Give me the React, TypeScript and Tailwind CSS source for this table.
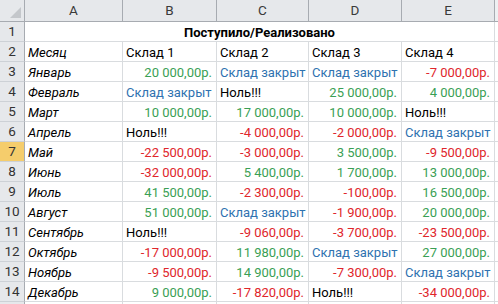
type Tone = 'g' | 'r' | 'b' | 'k';
type Cell = [string, Tone];

const colLetters = ['A', 'B', 'C', 'D', 'E'];

const Z: Cell = ['Ноль!!!', 'k'];
const X: Cell = ['Склад закрыт', 'b'];

const rows: { month: string; cells: Cell[] }[] = [
  { month: 'Январь', cells: [['20 000,00р.', 'g'], X, X, ['-7 000,00р.', 'r']] },
  { month: 'Февраль', cells: [X, Z, ['25 000,00р.', 'g'], ['4 000,00р.', 'g']] },
  { month: 'Март', cells: [['10 000,00р.', 'g'], ['17 000,00р.', 'g'], ['10 000,00р.', 'g'], Z] },
  { month: 'Апрель', cells: [Z, ['-4 000,00р.', 'r'], ['-2 000,00р.', 'r'], X] },
  { month: 'Май', cells: [['-22 500,00р.', 'r'], ['-3 000,00р.', 'r'], ['3 500,00р.', 'g'], ['-9 500,00р.', 'r']] },
  { month: 'Июнь', cells: [['-32 000,00р.', 'r'], ['5 400,00р.', 'g'], ['1 700,00р.', 'g'], ['13 000,00р.', 'g']] },
  { month: 'Июль', cells: [['41 500,00р.', 'g'], ['-2 300,00р.', 'r'], ['-100,00р.', 'r'], ['16 500,00р.', 'g']] },
  { month: 'Август', cells: [['51 000,00р.', 'g'], X, ['-1 900,00р.', 'r'], ['20 000,00р.', 'g']] },
  { month: 'Сентябрь', cells: [Z, ['-9 060,00р.', 'r'], ['-3 700,00р.', 'r'], ['-23 500,00р.', 'r']] },
  { month: 'Октябрь', cells: [['-17 000,00р.', 'r'], ['11 980,00р.', 'g'], X, ['27 000,00р.', 'g']] },
  { month: 'Ноябрь', cells: [['-9 500,00р.', 'r'], ['14 900,00р.', 'g'], ['-7 300,00р.', 'r'], X] },
  { month: 'Декабрь', cells: [['9 000,00р.', 'g'], ['-17 820,00р.', 'r'], Z, ['-34 000,00р.', 'r']] },
];

const toneClass: Record<Tone, string> = {
  g: 'text-[#3a9f55] justify-end pr-[4px]',
  r: 'text-[#e0262b] justify-end pr-[4px]',
  b: 'text-[#2f72b0] justify-start pl-[3px]',
  k: 'text-black justify-start pl-[3px]',
};

const cellBase = 'flex items-center pt-[1px] whitespace-nowrap overflow-visible border-r border-b border-[#d9dcdf] bg-white';
const rowHead = 'flex items-center justify-center pt-[1px] border-r border-b border-r-[#a7abb1] border-b-[#cdd1d6] text-[13.5px] text-[#333]';

function RowNum({ n, label = true }: { n: number; label?: boolean }) {
  const active = n === 7;
  return (
    <div className={`${rowHead} ${active ? 'bg-[#f5cd6c]' : 'bg-[#e6e8eb]'}`}>{label ? n : null}</div>
  );
}

export default function App() {
  return (
    <div
      className="h-[304px] w-[498px] overflow-hidden bg-white text-[13px] leading-none"
      style={{ fontFamily: 'Roboto, "Liberation Sans", sans-serif' }}
    >
      <div className="grid grid-cols-[25px_98px_94px_92px_93px_93px_1fr] grid-rows-[22px_repeat(15,20px)]">
        {/* column headers */}
        <div className="relative border-r border-b border-[#a7abb1] bg-[#e6e8eb]">
          <div className="absolute bottom-[3px] right-[3px] h-0 w-0 border-b-[11px] border-l-[11px] border-b-[#c4c7cb] border-l-transparent" />
        </div>
        {colLetters.map((l) => (
          <div
            key={l}
            className="flex items-center justify-center border-r border-b border-[#a7abb1] bg-[#e6e8eb] text-[13.5px] text-[#3a3a3a]"
          >
            {l}
          </div>
        ))}
        <div className="border-b border-[#a7abb1] bg-[#eef0f2]" />

        {/* row 1: merged title */}
        <RowNum n={1} />
        <div className="col-span-5 flex items-center justify-center pt-[1px] border-r border-b border-[#d9dcdf] font-bold text-black">
          Поступило/Реализовано
        </div>
        <div className="border-b border-[#d9dcdf]" />

        {/* row 2: headings */}
        <RowNum n={2} />
        <div className={`${cellBase} pl-[3px] italic`}>Месяц</div>
        {['Склад 1', 'Склад 2', 'Склад 3', 'Склад 4'].map((s) => (
          <div key={s} className={`${cellBase} pl-[3px]`}>
            {s}
          </div>
        ))}
        <div className="border-b border-[#d9dcdf]" />

        {rows.map((r, i) => (
          <div key={r.month} className="contents">
            <RowNum n={i + 3} />
            <div className={`${cellBase} pl-[3px] italic text-black`}>{r.month}</div>
            {r.cells.map(([v, t], j) => (
              <div key={j} className={`${cellBase} ${toneClass[t]}`}>
                {v}
              </div>
            ))}
            <div className="border-b border-[#d9dcdf]" />
          </div>
        ))}

        <RowNum n={15} label={false} />
        {colLetters.map((l) => (
          <div key={l} className={cellBase} />
        ))}
        <div />
      </div>
    </div>
  );
}
